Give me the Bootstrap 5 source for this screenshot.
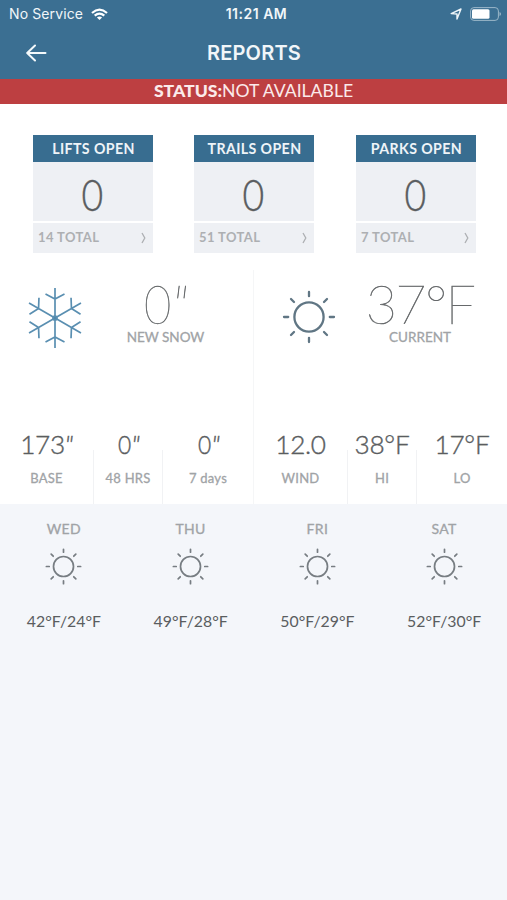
<!DOCTYPE html>
<html lang="en">
<head>
<meta charset="utf-8">
<meta name="viewport" content="width=device-width, initial-scale=1">
<title>Reports</title>
<link href="https://cdn.jsdelivr.net/npm/bootstrap@5.3.0/dist/css/bootstrap.min.css" rel="stylesheet">
<style>
  body { font-family: Lato, "Open Sans", sans-serif; background: #f4f6fa; color: #5a5d60; line-height: 1; overflow: hidden; }
  svg { display: block; flex: none; }
  .top-area { background: #3b6f92; color: #f1f6f9; font-family: Inter, sans-serif; }
  .status-bar { height: 28px; font-size: 14px; padding: 0 6px 0 9px; }
  .status-bar > div { flex: 1 1 0; }
  .carrier { letter-spacing: .12px; }
  .clock { font-size: 14px; letter-spacing: .5px; padding-left: 3px; }
  .title-bar { height: 51px; padding: 0 26px 2px; }
  .title-bar h1 { font-size: 20px; font-weight: 600; letter-spacing: .2px; margin: 0 26px 0 0; padding-left: 6px; }
  .alert-strip { height: 25px; background: #bd3f41; color: #fbeaea; font-size: 17.6px; padding-bottom: 2px; }
  .alert-strip b { font-weight: 900; }
  .main-panel { background: #fff; height: 400px; padding-top: 31px; }
  .tiles { padding-left: 33px; gap: 41px; height: 118px; }
  .tile { width: 120px; }
  .tile:last-child { margin-left: 1px; }
  .tile-head { height: 27px; background: #386d90; color: #eef4f8; font-size: 14.2px; font-weight: 700; letter-spacing: .4px; padding: 1px 0 0 1px; }
  .tile-count { height: 59px; background: #eef0f4; font-size: 43px; font-weight: 300; padding: 6px 2px 0 0; -webkit-text-stroke: .4px; }
  .zero { display: inline-block; transform: scaleX(.87); }
  .tile-foot { height: 30px; margin-top: 2px; background: #eef0f4; color: #adafb2; font-size: 13px; font-weight: 700; letter-spacing: .4px; padding: 0 7px 1px 5px; }
  .halves { margin-top: 17px; height: 234px; }
  .half { width: 253px; }
  .half + .half { width: 254px; border-left: 1px solid #f5f6f7; }
  .now { height: 84px; }
  .now-value { font-size: 54px; font-weight: 100; line-height: 44px; height: 44px; margin: 12px 0 5px; white-space: nowrap; color: #66696b; -webkit-text-stroke: .5px; letter-spacing: -1.7px; }
  .caption { color: #a0a3a6; font-size: 13.5px; -webkit-text-stroke: .3px; }
  .snowfall .now-value { padding-right: 3px; }
  .current { padding-right: 3px; }
  .slant { font-style: italic; }
  .stats { margin-top: 70px; height: 80px; }
  .stat { padding-top: 5px; width: 90px; white-space: nowrap; }
  .stat.first { width: 93px; }
  .stat.mid { width: 70px; background: linear-gradient(#f1f2f4, #f1f2f4) left bottom / 1px 54px no-repeat, linear-gradient(#f1f2f4, #f1f2f4) right bottom / 1px 54px no-repeat; }
  .stat-value { font-size: 26.2px; height: 30px; line-height: 30px; font-weight: 300; -webkit-text-stroke: .4px; letter-spacing: -.3px; }
  .stat .caption { margin-top: 13px; height: 14px; font-size: 13px; letter-spacing: .25px; }
  .day { padding-top: 18px; }
  .day .caption { height: 14px; font-size: 14px; letter-spacing: .3px; padding-left: 1px; }
  .day svg { margin: 12px 0 0 1px; }
  .range { margin-top: 28px; font-size: 15.8px; white-space: nowrap; padding-left: 1px; }
</style>
</head>
<body>
<svg width="0" height="0" class="position-absolute" aria-hidden="true">
  <symbol id="sun" viewBox="0 0 54 54">
    <g fill="none" stroke="currentColor" stroke-linecap="round">
      <circle cx="27" cy="27" r="14.600"/>
      <path d="M27 2v4.200M27 47.800v4.200M2 27h4.200M47.800 27h4.200M9 9l3 3M42 42l3 3M45 9l-3 3M12 42l-3 3"/>
    </g>
  </symbol>
</svg>

<header class="top-area">
  <div class="status-bar d-flex align-items-center">
    <div class="carrier d-flex align-items-center gap-2">No Service
      <svg width="17" height="13" viewBox="0 0 17 13" fill="none" stroke="#fff" stroke-width="2.2"><path d="M1 5Q8.500-1.800 16 5M3.700 7.700Q8.500 3.500 13.300 7.700"/><path d="M8.500 12L5.900 9.400Q8.500 7.400 11.100 9.400z" fill="#fff" stroke="none"/></svg>
    </div>
    <div class="clock text-center fw-semibold">11:21 AM</div>
    <div class="d-flex align-items-center justify-content-end gap-2">
      <svg width="12" height="12" viewBox="0 0 12 12" fill="none" stroke="#eef5f9" stroke-width="1.4" stroke-linejoin="round"><path d="M11 1L7 11V6L1.200 5.600z"/></svg>
      <svg width="31" height="14" viewBox="0 0 31 14"><rect x=".6" y=".6" width="27.800" height="12.800" rx="3.300" fill="none" stroke="#9bb7c9"/><rect x="2" y="2.200" width="17.500" height="9.600" rx="1.500" fill="#fff"/><path d="M29.500 5v4q1.500-.5 1.500-2t-1.500-2" fill="#9bb7c9"/></svg>
    </div>
  </div>
  <div class="title-bar d-flex align-items-center">
    <svg width="21" height="18" viewBox="0 0 21 18" fill="none" stroke="#f4f9fb" stroke-width="2" stroke-linecap="round" stroke-linejoin="round"><path d="M19.500 9H1.500M9 1.500L1.200 9L9 16.500"/></svg>
    <h1 class="flex-fill text-center">REPORTS</h1>
  </div>
</header>
<div class="alert-strip d-flex align-items-center justify-content-center"><b>STATUS:</b><span>NOT AVAILABLE</span></div>

<main>
  <section class="main-panel">
    <div class="tiles d-flex">
      <div class="tile">
        <div class="tile-head d-flex align-items-center justify-content-center">LIFTS OPEN</div>
        <div class="tile-count d-flex align-items-center justify-content-center"><span class="zero">0</span></div>
        <div class="tile-foot d-flex align-items-center justify-content-between">14 TOTAL
          <svg width="5" height="12" viewBox="0 0 5 12" fill="none" stroke="#adafb2" stroke-width="1.300"><path d="M1 1L3.800 6L1 11"/></svg></div>
      </div>
      <div class="tile">
        <div class="tile-head d-flex align-items-center justify-content-center">TRAILS OPEN</div>
        <div class="tile-count d-flex align-items-center justify-content-center"><span class="zero">0</span></div>
        <div class="tile-foot d-flex align-items-center justify-content-between">51 TOTAL
          <svg width="5" height="12" viewBox="0 0 5 12" fill="none" stroke="#adafb2" stroke-width="1.300"><path d="M1 1L3.800 6L1 11"/></svg></div>
      </div>
      <div class="tile">
        <div class="tile-head d-flex align-items-center justify-content-center">PARKS OPEN</div>
        <div class="tile-count d-flex align-items-center justify-content-center"><span class="zero">0</span></div>
        <div class="tile-foot d-flex align-items-center justify-content-between">7 TOTAL
          <svg width="5" height="12" viewBox="0 0 5 12" fill="none" stroke="#adafb2" stroke-width="1.300"><path d="M1 1L3.800 6L1 11"/></svg></div>
      </div>
    </div>

    <div class="halves d-flex">
      <div class="half">
        <div class="now d-flex">
          <svg style="margin:17px 0 0 24px" width="62" height="62" viewBox="-31 -31 62 62" fill="none" stroke="#5a8fb1" stroke-width="1.700">
            <defs><g id="arm"><path d="M0 0V-30M-9.500-24L0-19L9.500-24"/></g></defs>
            <use href="#arm"/><use href="#arm" transform="rotate(60)"/><use href="#arm" transform="rotate(120)"/><use href="#arm" transform="rotate(180)"/><use href="#arm" transform="rotate(240)"/><use href="#arm" transform="rotate(300)"/>
            <circle r="2" fill="#4f88ad"/>
          </svg>
          <div class="text-center flex-fill pe-2 snowfall">
            <div class="now-value"><span class="zero">0</span><span class="slant">"</span></div>
            <div class="caption">NEW SNOW</div>
          </div>
        </div>
        <div class="stats d-flex text-center">
          <div class="stat first"><div class="stat-value">173<span class="slant">"</span></div><div class="caption">BASE</div></div>
          <div class="stat mid"><div class="stat-value"><span class="zero">0</span><span class="slant">"</span></div><div class="caption">48 HRS</div></div>
          <div class="stat"><div class="stat-value"><span class="zero">0</span><span class="slant">"</span></div><div class="caption">7 days</div></div>
        </div>
      </div>
      <div class="half">
        <div class="now d-flex">
          <svg style="margin:20px 0 0 28px" width="54" height="54" color="#607684" stroke-width="2.300"><use href="#sun"/></svg>
          <div class="text-center flex-fill current">
            <div class="now-value">37°F</div>
            <div class="caption">CURRENT</div>
          </div>
        </div>
        <div class="stats d-flex text-center">
          <div class="stat first"><div class="stat-value">12.0</div><div class="caption">WIND</div></div>
          <div class="stat mid"><div class="stat-value">38°F</div><div class="caption">HI</div></div>
          <div class="stat"><div class="stat-value">17°F</div><div class="caption">LO</div></div>
        </div>
      </div>
    </div>
  </section>

  <section class="row g-0 text-center">
    <div class="col day d-flex flex-column align-items-center"><div class="caption">WED</div><svg width="37" height="37" color="#777d82" stroke-width="2.500"><use href="#sun"/></svg><div class="range">42°F/24°F</div></div>
    <div class="col day d-flex flex-column align-items-center"><div class="caption">THU</div><svg width="37" height="37" color="#777d82" stroke-width="2.500"><use href="#sun"/></svg><div class="range">49°F/28°F</div></div>
    <div class="col day d-flex flex-column align-items-center"><div class="caption">FRI</div><svg width="37" height="37" color="#777d82" stroke-width="2.500"><use href="#sun"/></svg><div class="range">50°F/29°F</div></div>
    <div class="col day d-flex flex-column align-items-center"><div class="caption">SAT</div><svg width="37" height="37" color="#777d82" stroke-width="2.500"><use href="#sun"/></svg><div class="range">52°F/30°F</div></div>
  </section>
</main>
<script src="https://cdn.jsdelivr.net/npm/bootstrap@5.3.0/dist/js/bootstrap.bundle.min.js"></script>
</body>
</html>
